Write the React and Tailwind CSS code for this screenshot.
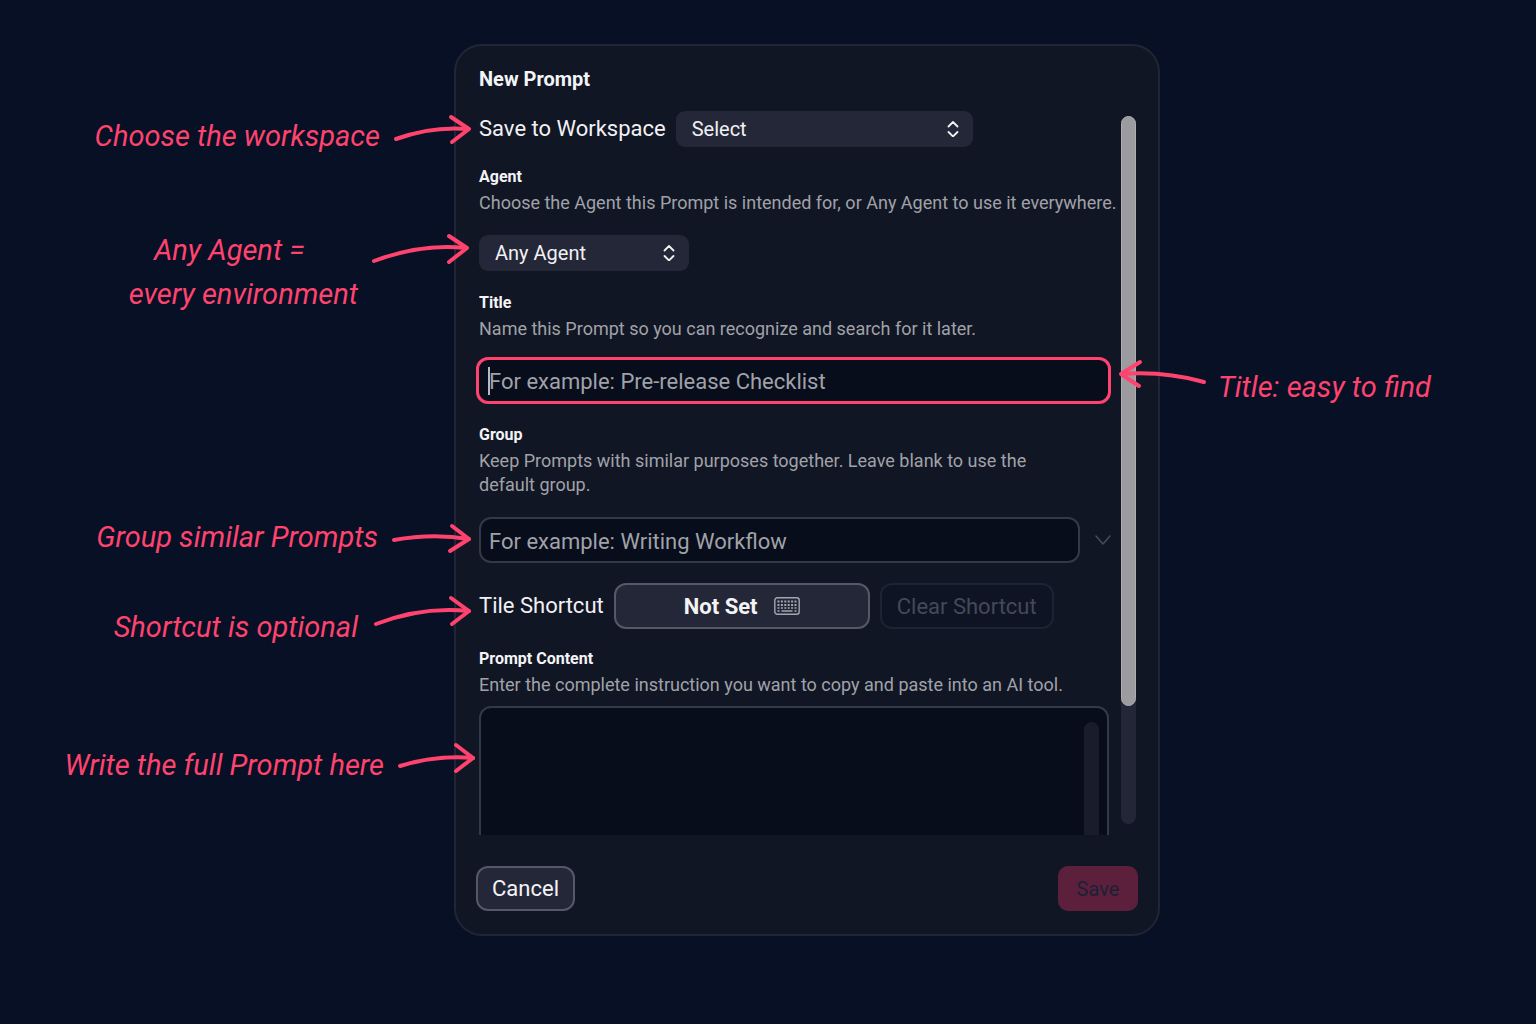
import React, { useState } from 'react';

const Note = ({ children, className = '' }) => (
  <div
    className={`flex items-start font-['Roboto',sans-serif] text-[29px] italic leading-[44px] whitespace-nowrap text-[#ff436f] ${className}`}
  >
    {children}
  </div>
);

const Arrow = ({ line, head, className = '' }) => (
  <svg
    className={`h-11 shrink-0 overflow-visible ${className}`}
    fill="none"
    stroke="#ff436f"
    strokeWidth="4"
    strokeLinecap="round"
    strokeLinejoin="round"
    aria-hidden="true"
  >
    <path d={line} />
    <path d={head} />
  </svg>
);

const Picker = ({ id, value, onChange, options, className = '' }) => (
  <div className={`relative h-9 ${className}`}>
    <select
      id={id}
      value={value}
      onChange={onChange}
      className="h-full w-full appearance-none rounded-[9px] bg-[#242738] pl-4 pr-9 text-xl text-[#f1f1f3] outline-none"
    >
      {options.map((option) => (
        <option key={option}>{option}</option>
      ))}
    </select>
    <svg
      className="pointer-events-none absolute right-3 top-2.5 h-4 w-4"
      viewBox="0 0 16 16"
      fill="none"
      stroke="#f1f1f3"
      strokeWidth="1.8"
      strokeLinecap="round"
      strokeLinejoin="round"
      aria-hidden="true"
    >
      <path d="M3.5 5.5 8 1l4.5 4.5M3.5 11 8 15.5l4.5-4.5" />
    </svg>
  </div>
);

const FieldLabel = ({ htmlFor, title, children }) => (
  <>
    <label htmlFor={htmlFor} className="block text-base font-bold leading-5 text-[#f4f4f6]">
      {title}
    </label>
    <p className="mt-1 text-lg leading-6 text-[#a0a2a8]">{children}</p>
  </>
);

const KeyboardIcon = () => (
  <svg className="h-[18px] w-[26px]" viewBox="0 0 26 18" fill="none" stroke="#a4a5ad" aria-hidden="true">
    <rect x="0.8" y="0.8" width="24.4" height="16.4" rx="2.5" strokeWidth="1.4" />
    <path d="M3.5 4.5h19M3.5 8h19" strokeWidth="2" strokeDasharray="2 1.4" />
    <path d="M3.5 11h19" strokeWidth="1.6" strokeDasharray="2 1.4" />
    <path d="M3.5 14h2M7.5 14h11M20.5 14h2" strokeWidth="1.6" />
  </svg>
);

const App = () => {
  const [workspace, setWorkspace] = useState('Select');
  const [agent, setAgent] = useState('Any Agent');
  const [title, setTitle] = useState('');
  const [group, setGroup] = useState('');
  const [content, setContent] = useState('');

  return (
    <main className="grid min-h-screen grid-cols-[1fr_minmax(0,706px)_376px] items-start bg-[#071024] pt-11 font-['Roboto',sans-serif]">
      {/* Left notes */}
      <aside className="z-10 -mr-5 flex flex-col items-end pt-[70px]">
        <Note>
          <span className="mr-2.5">Choose the workspace</span>
          <Arrow className="w-[84px]" line="M6 25Q42 12 78 15" head="M61 3 79 15 62 28" />
        </Note>
        <Note className="mt-[70px]">
          <span className="mr-3 text-center">
            <span className="mr-7">Any Agent =</span>
            <br />
            every environment
          </span>
          <Arrow className="w-[104px]" line="M4 33Q52 15 96 20" head="M79 8 97 20 79 34" />
        </Note>
        <Note className="mt-[199px]">
          <span className="mr-3">Group similar Prompts</span>
          <Arrow className="w-[84px]" line="M4 25Q42 18 79 24" head="M62 11 79 24 60 36" />
        </Note>
        <Note className="mt-[46px]">
          <span className="mr-3">Shortcut is optional</span>
          <Arrow className="w-[104px]" line="M6 19Q52 1 99 6" head="M81 -7 99 6 82 19" />
        </Note>
        <Note className="mt-[94px]">
          <span className="mr-2.5">Write the full Prompt here</span>
          <Arrow className="w-20" line="M6 23Q42 12 79 15" head="M62 2 79 15 62 28" />
        </Note>
      </aside>

      {/* Dialog */}
      <section className="rounded-[28px] border-2 border-[#212636] bg-[#111625] pb-[23px] pl-[23px] pr-5 pt-[19px]">
        <h1 className="text-xl font-bold leading-7 text-[#f4f4f6]">New Prompt</h1>

        <div className="mt-[18px] flex gap-[3px]">
          <div className="min-w-0 flex-1">
            <div className="flex items-center gap-2.5">
              <label htmlFor="workspace" className="text-[22px] leading-7 text-[#f1f1f3]">
                Save to Workspace
              </label>
              <Picker
                id="workspace"
                className="w-[297px]"
                value={workspace}
                onChange={(e) => setWorkspace(e.target.value)}
                options={['Select', 'Personal', 'Team']}
              />
            </div>

            <div className="mt-5">
              <FieldLabel htmlFor="agent" title="Agent">
                Choose the Agent this Prompt is intended for, or Any Agent to use it everywhere.
              </FieldLabel>
              <Picker
                id="agent"
                className="mt-5 w-[210px]"
                value={agent}
                onChange={(e) => setAgent(e.target.value)}
                options={['Any Agent', 'Claude', 'Codex']}
              />
            </div>

            <div className="mt-[22px]">
              <FieldLabel htmlFor="title" title="Title">
                Name this Prompt so you can recognize and search for it later.
              </FieldLabel>
              <div className="relative -ml-[3px] mr-[7px] mt-4">
                <input
                  id="title"
                  value={title}
                  onChange={(e) => setTitle(e.target.value)}
                  placeholder="For example: Pre-release Checklist"
                  className="block h-[47px] w-full rounded-xl border-3 border-[#ff436f] bg-[#070d1b] px-2.5 pt-0.5 text-[22px] text-[#f1f1f3] outline-none placeholder:text-[#a0a2a8]"
                />
                <span className="absolute left-3 top-2.5 h-7 w-0.5 bg-[#b9bac0]" />
              </div>
            </div>

            <div className="mt-[21px]">
              <FieldLabel htmlFor="group" title="Group">
                Keep Prompts with similar purposes together. Leave blank to use the
                <br />
                default group.
              </FieldLabel>
              <div className="mt-5 flex items-center">
                <input
                  id="group"
                  value={group}
                  onChange={(e) => setGroup(e.target.value)}
                  placeholder="For example: Writing Workflow"
                  className="block h-[46px] min-w-0 flex-1 rounded-xl border-2 border-[#343948] bg-[#070d1b] px-2 pt-0.5 text-[22px] text-[#f1f1f3] outline-none placeholder:text-[#a0a2a8]"
                />
                <button type="button" aria-label="Show groups" className="flex w-[38px] justify-center pl-2">
                  <svg className="h-4 w-4" viewBox="0 0 16 16" fill="none" stroke="#484c5a" strokeWidth="1.5" strokeLinecap="round" strokeLinejoin="round">
                    <path d="M1 4l7 8 7-8" />
                  </svg>
                </button>
              </div>
            </div>

            <div className="mt-5 flex items-center gap-2.5">
              <span className="text-[22px] leading-7 text-[#f1f1f3]">Tile Shortcut</span>
              <button
                type="button"
                className="flex h-[46px] w-64 items-center justify-center gap-4 rounded-xl border-2 border-[#555866] bg-[#242738] text-[22px] font-bold text-[#f4f4f6]"
              >
                Not Set
                <KeyboardIcon />
              </button>
              <button
                type="button"
                disabled
                className="h-[46px] w-[174px] rounded-xl border-2 border-[#1e2333] bg-[#0f1424] text-[22px] text-[#444957]"
              >
                Clear Shortcut
              </button>
            </div>

            <div className="mt-5">
              <FieldLabel htmlFor="content" title="Prompt Content">
                Enter the complete instruction you want to copy and paste into an AI tool.
              </FieldLabel>
              <div className="relative mr-[9px] mt-[9px] h-[129px] overflow-hidden">
                <textarea
                  id="content"
                  value={content}
                  onChange={(e) => setContent(e.target.value)}
                  className="block h-48 w-full resize-none rounded-xl border-2 border-[#343948] bg-[#070d1b] p-2.5 pr-8 text-lg text-[#f1f1f3] outline-none"
                />
                <span className="absolute right-2.5 top-4 h-40 w-[15px] rounded-full bg-[#191c2b]" />
              </div>
            </div>
          </div>

          {/* Scroll track */}
          <div className="mb-[11px] mr-0.5 mt-[5px] w-[15px] rounded-full bg-[#232637]">
            <div className="h-5/6 rounded-full border border-[#adacb1] bg-[#9c9ba0]" />
          </div>
        </div>

        <div className="-ml-[3px] mt-[31px] flex items-center justify-between">
          <button
            type="button"
            className="h-[45px] w-[99px] rounded-xl border-2 border-[#555866] bg-[#242738] text-[22px] text-[#f4f4f6]"
          >
            Cancel
          </button>
          <button type="button" disabled className="h-[45px] w-20 rounded-[10px] bg-[#5d203c] text-xl text-[#1c2136]">
            Save
          </button>
        </div>
      </section>

      {/* Right note */}
      <aside className="z-10 -ml-11 pt-[321px]">
        <Note>
          <Arrow className="w-[92px]" line="M88 17Q48 6 6 9" head="M24 -3 5 9 23 21" />
          <span className="ml-2.5">Title: easy to find</span>
        </Note>
      </aside>
    </main>
  );
};

export default App;
